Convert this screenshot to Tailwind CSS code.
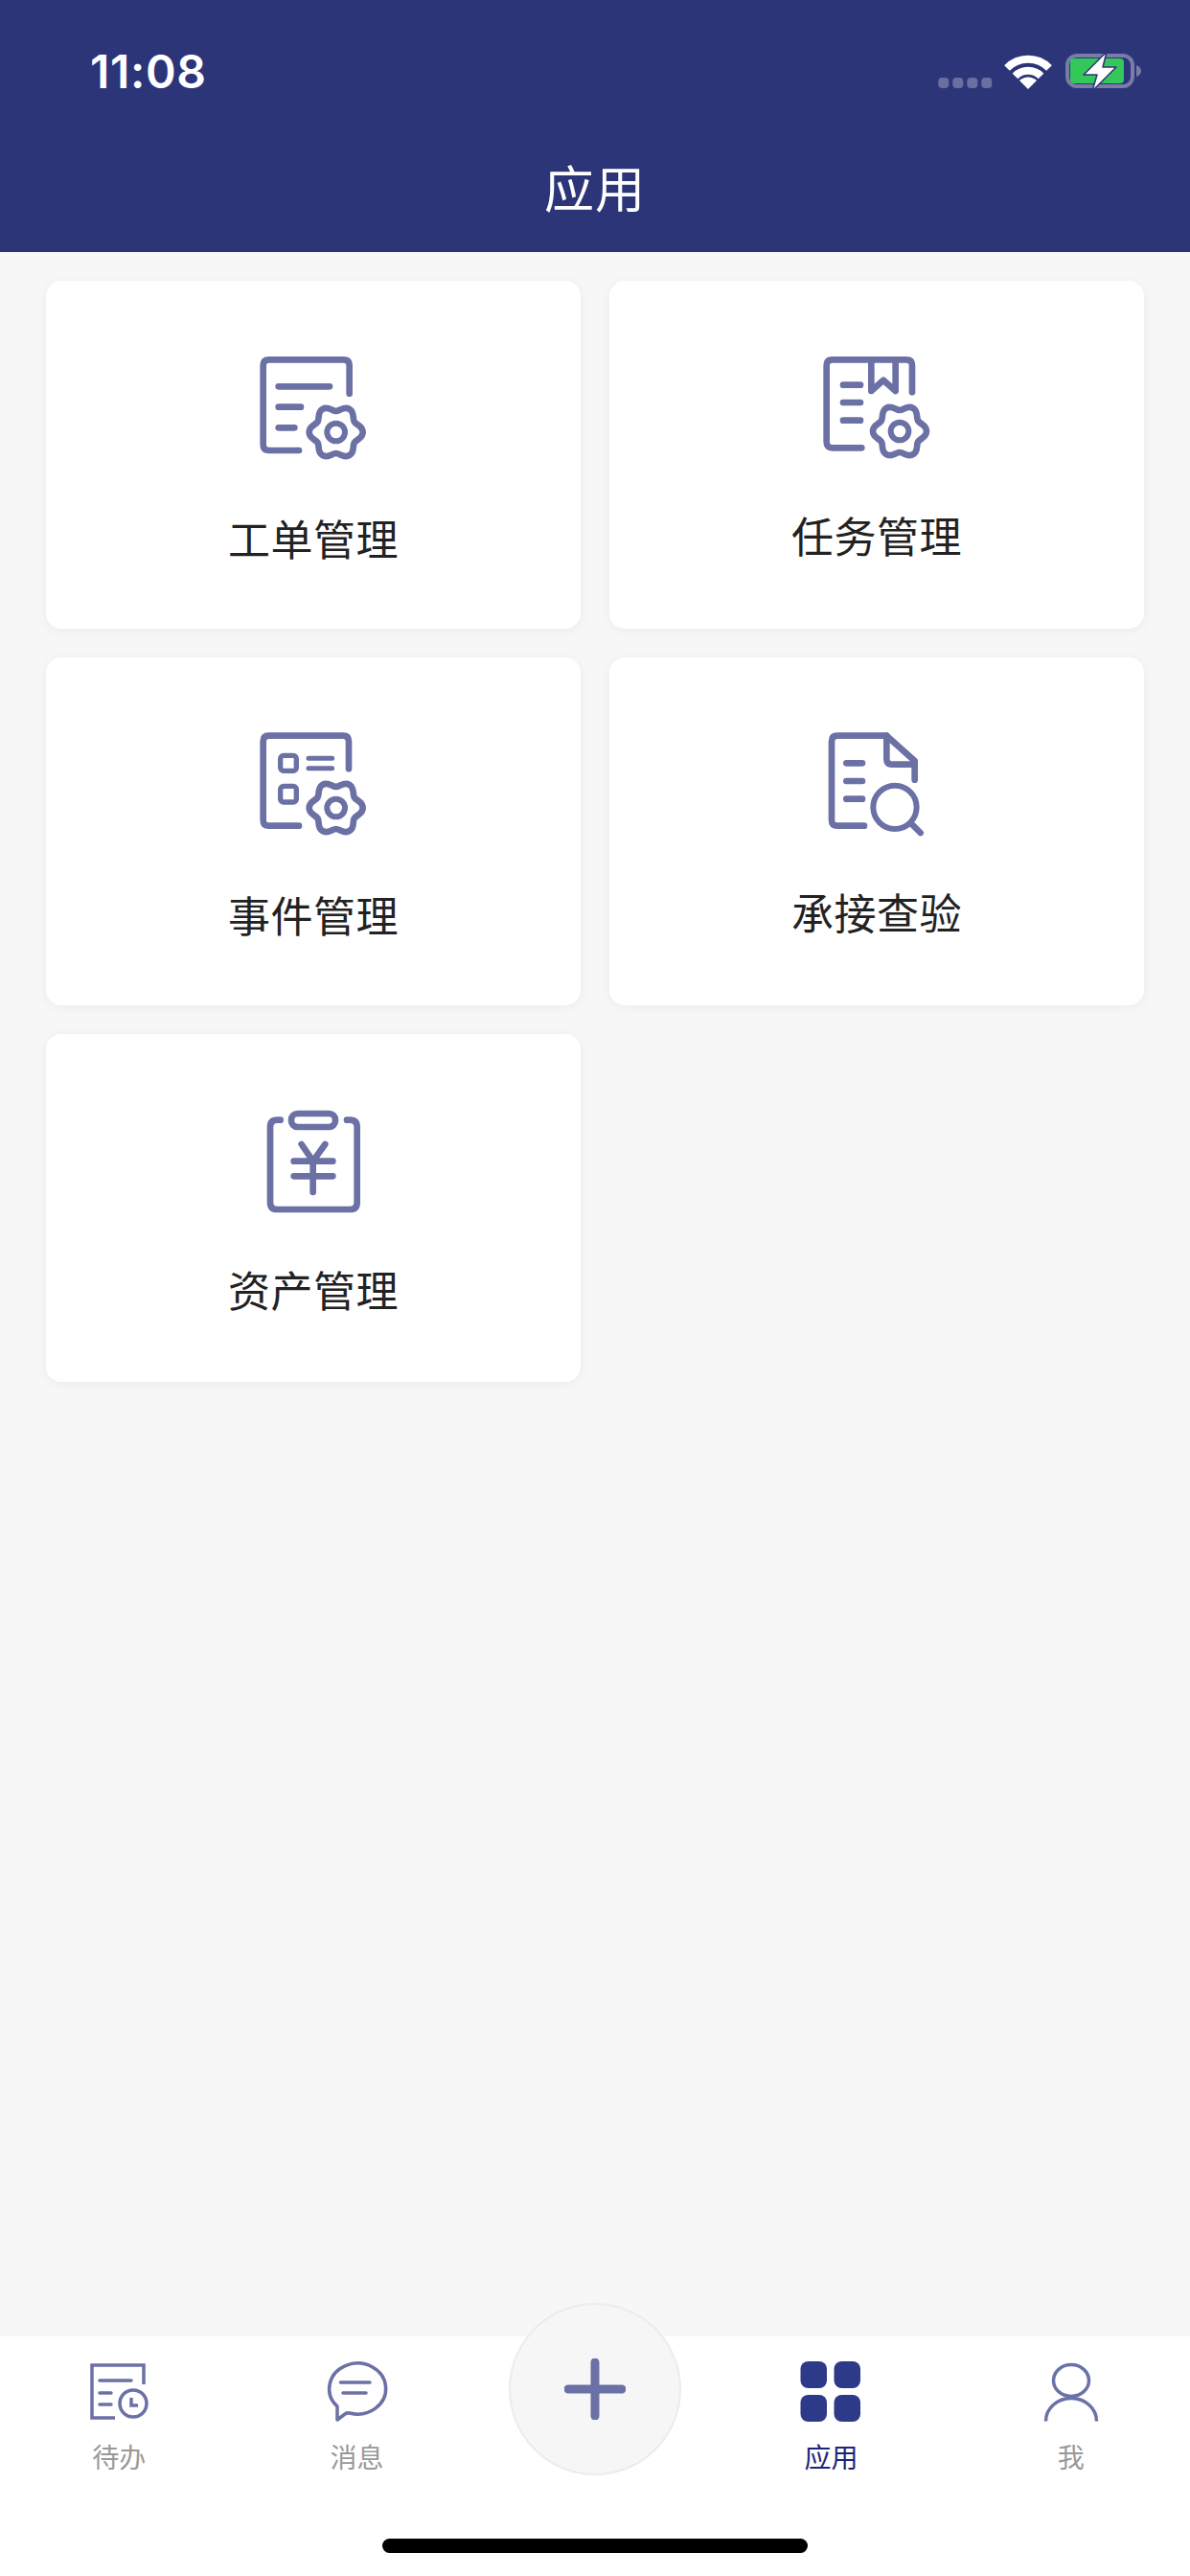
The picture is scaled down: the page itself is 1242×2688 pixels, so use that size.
<!DOCTYPE html>
<html lang="zh-CN">
<head>
<meta charset="UTF-8">
<meta name="viewport" content="width=device-width, initial-scale=1.0">
<title>应用</title>
<script src="https://cdn.jsdelivr.net/npm/@tailwindcss/browser@4"></script>
</head>
<body class="bg-[#f7f7f7] font-['Noto_Sans_CJK_SC',sans-serif]">

<svg class="hidden">
  <defs>
    <path id="gear" d="M0,-66 C12,-66 24.7,-82.7 42,-72.7 C59.3,-62.7 51.2,-43.4 57.2,-33 C63.2,-22.6 84,-20 84,0 C84,20 63.2,22.6 57.2,33 C51.2,43.4 59.3,62.7 42,72.7 C24.7,82.7 12,66 0,66 C-12,66 -24.7,82.7 -42,72.7 C-59.3,62.7 -51.2,43.4 -57.2,33 C-63.2,22.6 -84,20 -84,0 C-84,-20 -63.2,-22.6 -57.2,-33 C-51.2,-43.4 -59.3,-62.7 -42,-72.7 C-24.7,-82.7 -12,-66 0,-66 Z"/>
  </defs>
</svg>

<div class="relative w-[1242px] h-[2688px] flex flex-col overflow-hidden">

  <!-- header -->
  <header class="h-[263px] shrink-0 bg-[#2d3579] text-white flex flex-col">
    <div class="h-[150px] flex justify-between pl-[94px] pr-[47px] pt-[50px]">
      <span class="font-['Inter',sans-serif] font-semibold text-[48px] leading-[50px] tracking-[0.7px]">11:08</span>
      <svg width="220" height="50" viewBox="0 0 220 50">
        <g fill="#6a6f9f">
          <rect x="4.3" y="31" width="11" height="11" rx="4"/>
          <rect x="19.3" y="31" width="11" height="11" rx="4"/>
          <rect x="34.3" y="31" width="11" height="11" rx="4"/>
          <rect x="49.3" y="31" width="11" height="11" rx="4"/>
        </g>
        <g fill="none" stroke="#fff" stroke-width="8">
          <path d="M76,21 A31,31 0 0 1 120,21"/>
          <path d="M84.5,29.5 A19,19 0 0 1 111.5,29.5"/>
        </g>
        <path d="M98,43 L89,34 A13,13 0 0 1 107,34 Z" fill="#fff"/>
        <rect x="139" y="8" width="68" height="32" rx="10" fill="none" stroke="#777ca8" stroke-width="4"/>
        <rect x="142" y="11" width="56" height="26" rx="4" fill="#34c759"/>
        <path d="M211,18 Q216,20 216,24 Q216,28 211,30 Z" fill="#777ca8"/>
        <path d="M180,4 L156,28 L170,28 L165,45 L190,20 L176,20 Z" fill="#fff" stroke="#2d3579" stroke-width="1.5" stroke-linejoin="round"/>
      </svg>
    </div>
    <h1 class="text-center text-[52px] leading-[70px] font-normal tracking-[1px] mt-[10px]">应用</h1>
  </header>

  <!-- app cards -->
  <main class="flex-1 grid grid-cols-2 content-start gap-[30px] px-[48px] pt-[30px]">

    <a class="h-[363px] bg-white rounded-[16px] shadow-[0_2px_12px_rgba(0,0,0,0.05)] flex flex-col items-center pt-[47px]">
      <svg width="200" height="160" viewBox="21 0 600 480" fill="none" stroke="#6b70a5" stroke-width="20" stroke-linecap="round" stroke-linejoin="round">
        <path d="M434,212 V124 Q434,106 416,106 H182 Q164,106 164,124 V372 Q164,390 182,390 H276"/>
        <path d="M212,190 H372 M212,254 H282 M212,319 H262"/>
        <use href="#gear" transform="translate(392,333)"/>
        <circle cx="392" cy="333" r="28" stroke-width="18"/>
      </svg>
      <span class="mt-[31px] text-[44px] leading-[60px] tracking-[0.5px] text-[#222]">工单管理</span>
    </a>

    <a class="h-[363px] bg-white rounded-[16px] shadow-[0_2px_12px_rgba(0,0,0,0.05)] flex flex-col items-center pt-[47px]">
      <svg width="200" height="160" viewBox="-15 0 600 480" fill="none" stroke="#6b70a5" stroke-width="20" stroke-linecap="round" stroke-linejoin="round">
        <path d="M396,208 V124 Q396,106 378,106 H146 Q128,106 128,124 V364 Q128,382 146,382 H238"/>
        <path d="M268,106 V204 L306,170 L344,204 V106"/>
        <path d="M180,185 H234 M180,240 H234 M180,296 H234"/>
        <use href="#gear" transform="translate(357,330)"/>
        <circle cx="357" cy="330" r="28" stroke-width="18"/>
      </svg>
      <span class="mt-[28px] text-[44px] leading-[60px] tracking-[0.5px] text-[#222]">任务管理</span>
    </a>

    <a class="h-[363px] bg-white rounded-[16px] shadow-[0_2px_12px_rgba(0,0,0,0.05)] flex flex-col items-center pt-[47px]">
      <svg width="200" height="160" viewBox="21 -18 600 480" fill="none" stroke="#6b70a5" stroke-width="20" stroke-linecap="round" stroke-linejoin="round">
        <path d="M432,190 V104 Q432,86 414,86 H182 Q164,86 164,104 V350 Q164,368 182,368 H276"/>
        <rect x="218" y="148" width="50" height="48" rx="10" stroke-width="16"/>
        <rect x="218" y="244" width="50" height="50" rx="10" stroke-width="16"/>
        <path d="M306,157 H380 M306,188 H380" stroke-width="15"/>
        <use href="#gear" transform="translate(392,312)"/>
        <circle cx="392" cy="312" r="28" stroke-width="18"/>
      </svg>
      <span class="mt-[31px] text-[44px] leading-[60px] tracking-[0.5px] text-[#222]">事件管理</span>
    </a>

    <a class="h-[363px] bg-white rounded-[16px] shadow-[0_2px_12px_rgba(0,0,0,0.05)] flex flex-col items-center pt-[47px]">
      <svg width="200" height="160" viewBox="-15 -18 600 480" fill="none" stroke="#6b70a5" stroke-width="20" stroke-linecap="round" stroke-linejoin="round">
        <path d="M404,224 V165 L316,86 H162 Q144,86 144,104 V350 Q144,368 162,368 H246"/>
        <path d="M316,86 V158 Q316,176 334,176 H404"/>
        <path d="M190,172 H240 M190,228 H240 M190,284 H240"/>
        <circle cx="342" cy="310" r="68" stroke-width="18"/>
        <path d="M395,363 L422,390"/>
      </svg>
      <span class="mt-[28px] text-[44px] leading-[60px] tracking-[0.5px] text-[#222]">承接查验</span>
    </a>

    <a class="h-[363px] bg-white rounded-[16px] shadow-[0_2px_12px_rgba(0,0,0,0.05)] flex flex-col items-center pt-[47px]">
      <svg width="200" height="160" viewBox="21 -12 600 480" fill="none" stroke="#6b70a5" stroke-width="20" stroke-linecap="round" stroke-linejoin="round">
        <path d="M218,116 H208 Q186,116 186,138 V374 Q186,396 208,396 H436 Q458,396 458,374 V138 Q458,116 436,116 H426"/>
        <rect x="252" y="96" width="138" height="42" rx="20"/>
        <path d="M284,192 L320,245 L358,192 M260,245 H382 M260,292 H382 M320,245 V342"/>
      </svg>
      <span class="mt-[29px] text-[44px] leading-[60px] tracking-[0.5px] text-[#222]">资产管理</span>
    </a>

  </main>

  <!-- tab bar -->
  <footer class="relative h-[250px] shrink-0 bg-white pt-[22px]">
    <div class="grid grid-cols-5 text-[28px] leading-[36px] text-[#999]">

      <div class="flex flex-col items-center gap-[15px]">
        <svg width="70" height="70" viewBox="0 0 70 70" fill="none" stroke="#6b70a5" stroke-width="3.5">
          <path d="M61,28 V8 H7 V63 H31"/>
          <path d="M15,24 H48 M15,37 H27 M15,49 H27" stroke-linecap="round"/>
          <circle cx="50" cy="48" r="14"/>
          <path d="M48,42 V50 H55"/>
        </svg>
        <span>待办</span>
      </div>

      <div class="flex flex-col items-center gap-[15px]">
        <svg width="70" height="70" viewBox="3 0 70 70" fill="none" stroke="#6b70a5" stroke-width="3.5" stroke-linejoin="round">
          <path d="M17,51 A29.5,26.5 0 1 1 30,58 Q27,57.5 25,59 L17,65 Z"/>
          <path d="M20.5,26 H51 M23,37 H47" stroke-linecap="round"/>
        </svg>
        <span>消息</span>
      </div>

      <div></div>

      <div class="flex flex-col items-center gap-[15px] pr-[4px] text-[#1c2478]">
        <svg width="70" height="70" viewBox="0 0 70 70" fill="#2d3a8a">
          <rect x="3.5" y="4" width="27.5" height="28" rx="8"/>
          <rect x="38.5" y="4" width="27.5" height="28" rx="8"/>
          <rect x="3.5" y="39" width="27.5" height="28" rx="8"/>
          <rect x="38.5" y="39" width="27.5" height="28" rx="8"/>
        </svg>
        <span>应用</span>
      </div>

      <div class="flex flex-col items-center gap-[15px]">
        <svg width="70" height="70" viewBox="0 0 70 70" fill="none" stroke="#6b72a8" stroke-width="3.5">
          <ellipse cx="35" cy="24" rx="18.5" ry="16.5"/>
          <path d="M8.5,66.5 A26.5,24 0 0 1 61.5,66.5"/>
        </svg>
        <span>我</span>
      </div>
    </div>

    <div class="mt-[68px] mx-auto w-[444px] h-[15px] rounded-full bg-black"></div>

    <!-- add button overlaps the top edge of the bar -->
    <button class="absolute left-1/2 -translate-x-1/2 -top-[35px] w-[180px] h-[180px] rounded-full bg-[#f6f6f7] border-2 border-[#ececec] flex items-center justify-center">
      <svg width="64" height="64" viewBox="0 0 64 64" fill="none" stroke="#6b70a5" stroke-width="9" stroke-linecap="round">
        <path d="M32,4 V60 M4,32 H60"/>
      </svg>
    </button>
  </footer>
</div>

</body>
</html>
